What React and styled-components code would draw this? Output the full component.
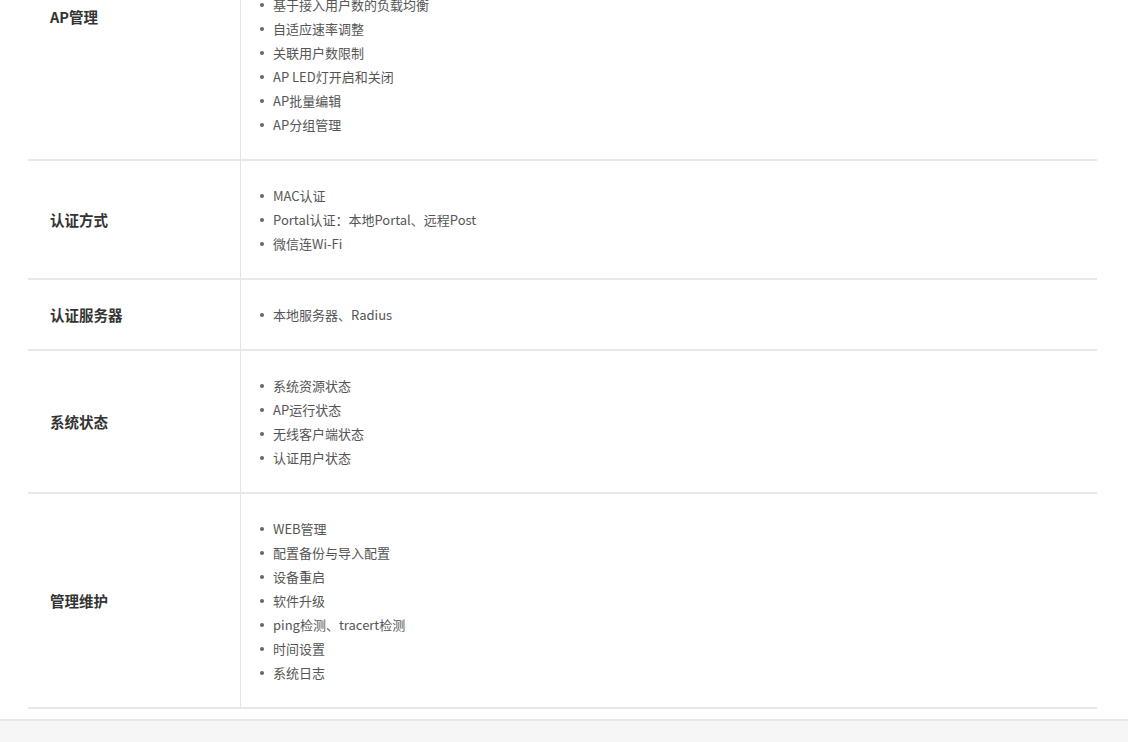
import React from 'react';
import styled, { createGlobalStyle } from 'styled-components';

const rows = [
    {
        label: 'AP管理',
        items: [
            'AP自动发现与注册',
            'AP射频参数配置',
            'SSID配置与隐藏',
            '基于信号强度的负载均衡',
            '基于接入用户数的负载均衡',
            '自适应速率调整',
            '关联用户数限制',
            'AP LED灯开启和关闭',
            'AP批量编辑',
            'AP分组管理',
        ],
    },
    {
        label: '认证方式',
        items: ['MAC认证', 'Portal认证：本地Portal、远程Post', '微信连Wi-Fi'],
    },
    {
        label: '认证服务器',
        items: ['本地服务器、Radius'],
    },
    {
        label: '系统状态',
        items: ['系统资源状态', 'AP运行状态', '无线客户端状态', '认证用户状态'],
    },
    {
        label: '管理维护',
        items: [
            'WEB管理',
            '配置备份与导入配置',
            '设备重启',
            '软件升级',
            'ping检测、tracert检测',
            '时间设置',
            '系统日志',
        ],
    },
];

function App() {
    return (
        <>
            <GlobalStyle />
            <Page>
                <Table>
                    {rows.map((row) => (
                        <Row key={row.label}>
                            <Label>{row.label}</Label>
                            <Content>
                                <List>
                                    {row.items.map((item) => (
                                        <Item key={item}>{item}</Item>
                                    ))}
                                </List>
                            </Content>
                        </Row>
                    ))}
                </Table>
            </Page>
            <Footer />
        </>
    );
}

export default App;

const GlobalStyle = createGlobalStyle`
    html, body {
        margin: 0;
        padding: 0;
        background: #fff;
        overflow: hidden;
    }
    body {
        font-family: "Noto Sans CJK SC", "Liberation Sans", sans-serif;
    }
`;

// the page is scrolled: the top of the first row is above the window
const Page = styled.div`
    padding: 0 31px 0 28px;
    margin-top: -126px;
`;

const Table = styled.div`
    display: flex;
    flex-direction: column;
`;

const Row = styled.div`
    display: grid;
    grid-template-columns: 213px 1fr;
    border-bottom: 2px solid #e8e8e8;
`;

const Label = styled.div`
    display: flex;
    align-items: center;
    padding-left: 22px;
    font-size: 14.5px;
    font-weight: bold;
    color: #333;
    border-right: 1px solid #e3e3e3;
`;

const Content = styled.div`
    padding: 23px 0 22px 19px;
`;

const List = styled.ul`
    margin: 0;
    padding: 0;
    list-style: none;
`;

const Item = styled.li`
    position: relative;
    padding-left: 13px;
    font-size: 13px;
    line-height: 24px;
    color: #555;

    &::before {
        content: '';
        position: absolute;
        left: 0;
        top: 10px;
        width: 4px;
        height: 4px;
        border-radius: 50%;
        background: #666;
    }
`;

const Footer = styled.div`
    margin-top: 10px;
    height: 40px;
    background: #f6f6f6;
    border-top: 2px solid #e8e8e8;
`;
